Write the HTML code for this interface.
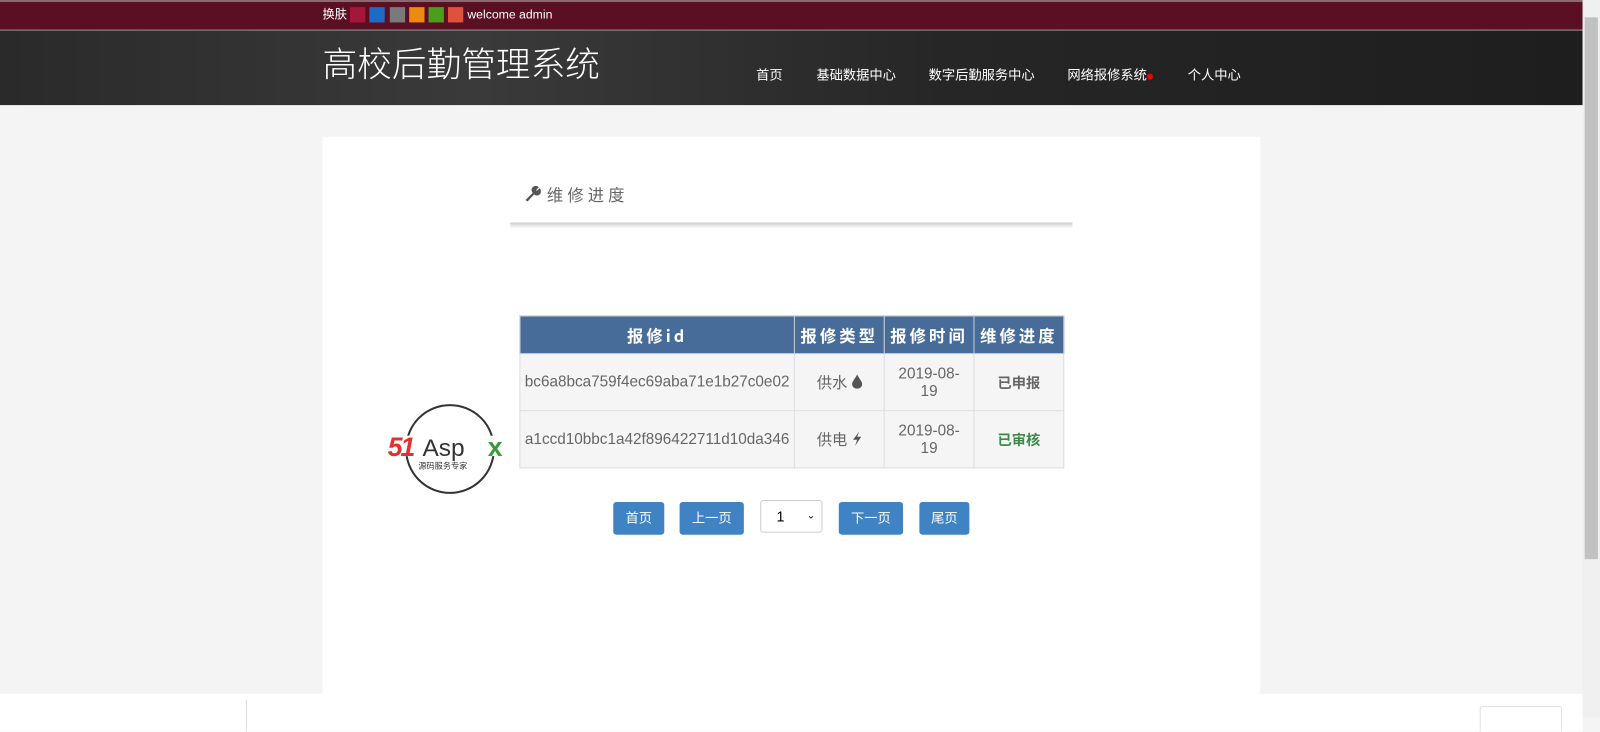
<!DOCTYPE html>
<html><head><meta charset="utf-8"><style>
*{margin:0;padding:0;box-sizing:border-box}
body{width:1600px;height:717px;overflow:hidden;background:#f4f4f4;font-family:"Liberation Sans","Noto Sans CJK SC",sans-serif;position:relative}
#w{position:absolute;left:0;top:0;width:1568px;height:703px;transform:scale(1.0204);transform-origin:0 0}
.top{position:absolute;left:0;top:0;width:1551px;height:29px;background:#5a1022;border-top:2px solid #8a6a70}
.top .t{position:absolute;left:316px;top:0;line-height:25px;color:#fff;font-size:12px}
.sw{position:absolute;top:5px;width:15px;height:15px}
.hd{position:absolute;left:0;top:29px;width:1551px;height:74px;background:linear-gradient(90deg,#2a2a2a,#3a3a3a 30%,#262626 60%,#1e1e1e);border-top:1px solid #777}
.hd h1{position:absolute;left:316px;top:6px;color:#fff;font-weight:300;font-size:34px;font-family:"Noto Sans CJK SC",sans-serif}
.nav{position:absolute;top:33px;color:#fff;font-size:13px}
.main{position:absolute;left:316px;top:134px;width:919px;height:560px;background:#fff}
.ttl{position:absolute;left:500px;top:178px;color:#666;font-size:16px;letter-spacing:4px}
.bar{position:absolute;left:500px;top:218px;width:551px;height:6px;background:linear-gradient(#ccc,#fff)}
table{position:absolute;left:509px;top:309px;border-collapse:collapse;font-size:15px}
th{background:#486c9a;color:#fff;height:37px;font-weight:bold;letter-spacing:3px;border:1px solid #ccc;font-size:16px;font-family:"Noto Sans CJK SC",sans-serif}
td{background:#f5f5f5;color:#666;border:1px solid #ddd;text-align:center;height:56px}
.btn{position:absolute;top:492px;height:32px;background:#3f83c4;color:#fff;font-size:13px;border-radius:3px;text-align:center;line-height:32px}
.sb{position:absolute;left:1551px;top:0;width:17px;height:703px;background:#f0f0f0}
.sb div{position:absolute;left:2px;top:17px;width:13px;height:531px;background:#c1c1c1}
.foot{position:absolute;left:0;top:680px;width:1551px;height:37px;background:#fff}
</style></head><body><div id="w">
<div class="top"><span class="t">换肤</span>
<div class="sw" style="left:343px;background:#a3173a"></div>
<div class="sw" style="left:362px;background:#1d6bc7"></div>
<div class="sw" style="left:382px;background:#7a7a7a"></div>
<div class="sw" style="left:401px;background:#ec8b10"></div>
<div class="sw" style="left:420px;background:#4a9e1a"></div>
<div class="sw" style="left:439px;background:#e0513a"></div>
<span class="t" style="left:458px">welcome admin</span></div>
<div class="hd"><h1>高校后勤管理系统</h1>
<span class="nav" style="left:741px">首页</span>
<span class="nav" style="left:800px">基础数据中心</span>
<span class="nav" style="left:910px">数字后勤服务中心</span>
<span class="nav" style="left:1046px">网络报修系统<span style="display:inline-block;width:6px;height:6px;background:#e00;border-radius:50%"></span></span>
<span class="nav" style="left:1164px">个人中心</span></div>
<div class="main"></div>
<div class="ttl"><svg width="16" height="16" viewBox="0 0 16 16" style="vertical-align:-1px;margin-left:14px;margin-right:6px"><path d="M1 14 L8 7 A4 4 0 0 1 14 1.5 L11.5 4.2 L12 5 L15 2.5 A4 4 0 0 1 9.5 8.5 L3 15.5 Z" fill="#555"/></svg>维修进度</div>
<div class="bar"></div>
<table>
<tr><th style="width:269px">报修id</th><th style="width:88px">报修类型</th><th style="width:88px">报修时间</th><th style="width:88px">维修进度</th></tr>
<tr><td>bc6a8bca759f4ec69aba71e1b27c0e02</td><td>供水 <svg width="10" height="14" viewBox="0 0 10 14" style="vertical-align:-1px"><path d="M5 0 C3 4 0 7 0 9.5 A5 4.5 0 0 0 10 9.5 C10 7 7 4 5 0Z" fill="#555"/></svg></td><td>2019-08-<br>19</td><td style="font-weight:bold;font-size:14px">已申报</td></tr>
<tr><td>a1ccd10bbc1a42f896422711d10da346</td><td>供电 <svg width="10" height="14" viewBox="0 0 10 14" style="vertical-align:-1px"><path d="M7 0 L1 8 L5 8 L3 14 L9 5 L5 5 Z" fill="#555"/></svg></td><td>2019-08-<br>19</td><td style="font-weight:bold;color:#3c8a4a;font-size:14px">已审核</td></tr>
</table>
<svg style="position:absolute;left:378px;top:395px" width="125" height="90"><ellipse cx="63" cy="45" rx="43" ry="43" fill="none" stroke="#333" stroke-width="2"/><rect x="0" y="32" width="125" height="20" fill="#fff"/><text x="2" y="52" font-size="26" font-weight="bold" font-style="italic" fill="#e03030" font-family="Liberation Sans" letter-spacing="-2">51</text><text x="36" y="52" font-size="24" fill="#333" font-family="Liberation Sans">Asp</text><text x="100" y="52" font-size="26" fill="#3a9a3a" font-weight="bold" font-family="Liberation Sans">x</text><text x="32" y="64" font-size="8" fill="#333" font-family="Noto Sans CJK SC">源码服务专家</text></svg>
<div class="btn" style="left:601px;width:50px">首页</div>
<div class="btn" style="left:666px;width:63px">上一页</div>
<div style="position:absolute;left:745px;top:490px;width:61px;height:32px;border:1px solid #ccc;border-radius:3px;background:#fff;font-size:14px;line-height:30px;padding-left:15px">1 <span style="position:absolute;right:6px;font-size:10px">⌄</span></div>
<div class="btn" style="left:822px;width:63px">下一页</div>
<div class="btn" style="left:901px;width:49px">尾页</div>
<div class="foot"><div style="position:absolute;left:241px;top:6px;width:1px;height:31px;background:#ddd"></div><div style="position:absolute;left:1450px;top:12px;width:81px;height:25px;border:1px solid #ddd;border-bottom:none;border-radius:3px 3px 0 0"></div></div>
<div class="sb"><div></div></div>
</div></body></html>
